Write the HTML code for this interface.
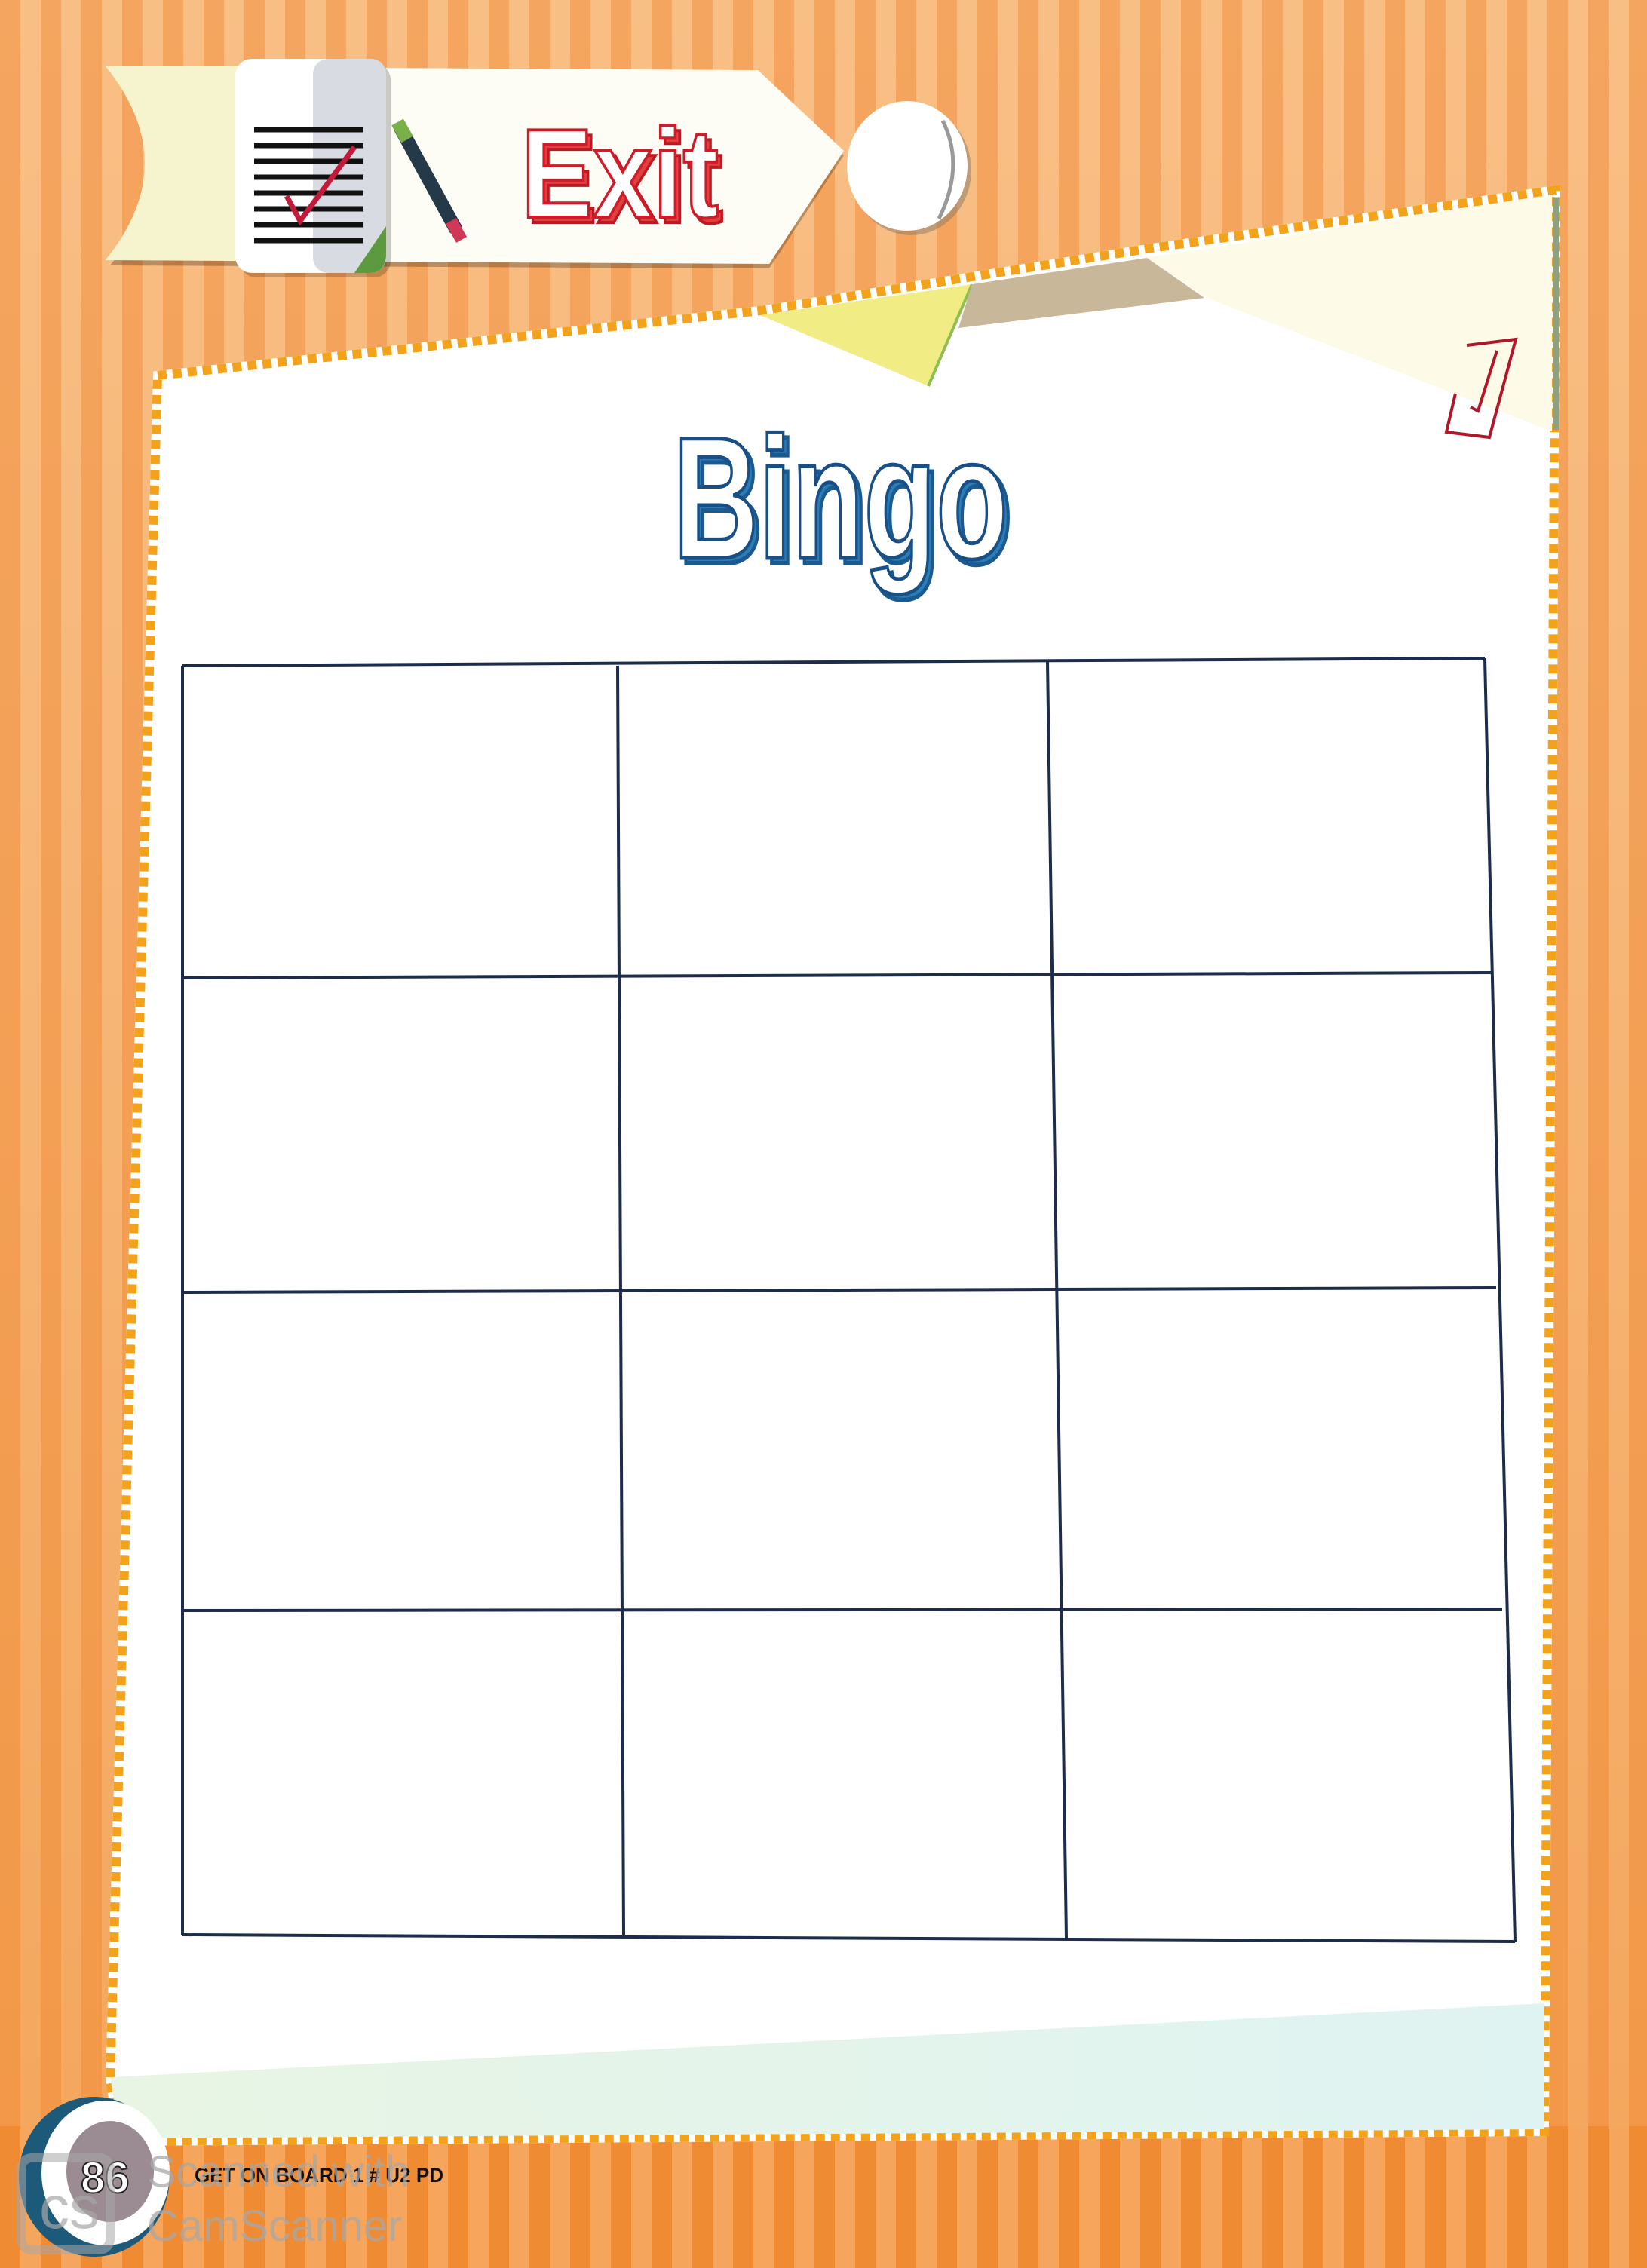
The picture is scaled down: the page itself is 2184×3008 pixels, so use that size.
<!DOCTYPE html>
<html><head><meta charset="utf-8"><style>
html,body{margin:0;padding:0;width:2184px;height:3008px;overflow:hidden;background:#f5ad68;}
svg{display:block}
</style></head><body>
<svg width="2184" height="3008" viewBox="0 0 2184 3008" xmlns="http://www.w3.org/2000/svg">
<defs>
<pattern id="st" width="54" height="3008" patternUnits="userSpaceOnUse">
<rect width="54" height="3008" fill="#f4a55f"/>
<rect x="27" width="27" height="3008" fill="#f8bf85"/>
</pattern>
<pattern id="st2" width="54" height="3008" patternUnits="userSpaceOnUse">
<rect width="54" height="3008" fill="#ef8b33"/>
<rect x="27" width="27" height="3008" fill="#f5a55c"/>
</pattern>
<linearGradient id="fade" x1="0" y1="0" x2="0" y2="1">
<stop offset="0" stop-color="#ee8628" stop-opacity="0"/>
<stop offset="0.4" stop-color="#ee8628" stop-opacity="0.15"/>
<stop offset="1" stop-color="#ee8628" stop-opacity="0.45"/>
</linearGradient>
<linearGradient id="band" x1="0" y1="0" x2="1" y2="0">
<stop offset="0" stop-color="#e8f5e4"/><stop offset="1" stop-color="#dff3f2"/>
</linearGradient>
</defs>
<rect width="2184" height="3008" fill="url(#st)"/>
<rect width="2184" height="3008" fill="url(#fade)"/>
<rect y="2820" width="2184" height="188" fill="url(#st2)"/>

<!-- paper -->
<polygon points="209,498 1008,412 1521,330 2063,252 2048,2827 160,2840 146,2760" fill="#fff" stroke="#fff" stroke-width="12"/>
<polygon points="209,498 1008,412 1521,330 2063,252 2048,2827 160,2840 146,2760" fill="none" stroke="#f3a21c" stroke-width="12" stroke-dasharray="12 8"/>
<polygon points="146,2755 2048,2657 2048,2824 160,2836" fill="url(#band)"/>
<!-- bunting -->
<polygon points="1008,418 1289,377 1231,512" fill="#f1ec84"/>
<line x1="1289" y1="377" x2="1231" y2="512" stroke="#8fbf50" stroke-width="4"/>
<polygon points="1289,377 1521,342 1597,395 1271,435" fill="#c9b79a"/>
<polygon points="1521,342 2058,258 2058,572 1600,395" fill="#fdfbe7"/>
<line x1="2063" y1="262" x2="2063" y2="570" stroke="#8fa080" stroke-width="8"/>
<path d="M1945,458 L2010,450 L1975,580 L1918,573 L1930,522 M1950,540 L1960,545 L1985,465" fill="none" stroke="#b0182a" stroke-width="4"/>

<!-- grid -->
<g stroke="#1d2c4a" stroke-width="4" fill="none">
<line x1="242" y1="883" x2="1969" y2="873"/>
<line x1="242" y1="1297" x2="1977" y2="1290"/>
<line x1="242" y1="1714" x2="1984" y2="1708"/>
<line x1="242" y1="2136" x2="1992" y2="2134"/>
<line x1="242" y1="2566" x2="2009" y2="2575"/>
<line x1="242" y1="883" x2="242" y2="2566"/>
<line x1="819" y1="883" x2="827" y2="2566"/>
<line x1="1389" y1="877" x2="1414" y2="2570"/>
<line x1="1969" y1="873" x2="2009" y2="2575"/>
</g>

<!-- Bingo title -->
<g font-family="Liberation Sans, sans-serif" font-weight="bold">
<text x="899" y="747" font-size="230" textLength="444" lengthAdjust="spacingAndGlyphs" fill="#2a7db5" stroke="#1a5a90" stroke-width="6">Bingo</text>
<text x="893" y="740" font-size="230" textLength="444" lengthAdjust="spacingAndGlyphs" fill="#fff" stroke="#174f86" stroke-width="5">Bingo</text>
</g>

<!-- exit banner -->
<path d="M146,96 L1005,99 L1119,206 L1020,356 L146,352 Q250,224 146,96 Z" fill="#000" opacity="0.25"/>
<path d="M140,88 L1005,93 L1119,200 L1020,350 L140,345 Q244,216 140,88 Z" fill="#fdfdf6"/>
<path d="M140,88 L320,88 L320,345 L140,345 Q244,216 140,88 Z" fill="#f6f3cf"/>
<ellipse cx="1208" cy="226" rx="80" ry="86" fill="#8a7a6a" opacity="0.5"/>
<ellipse cx="1203" cy="220" rx="80" ry="86" fill="#fff"/>
<path d="M1250,160 Q1280,220 1245,290" fill="none" stroke="#999" stroke-width="5"/>
<!-- document icon -->
<rect x="318" y="84" width="200" height="284" rx="22" fill="#000" opacity="0.2"/>
<rect x="312" y="78" width="200" height="284" rx="22" fill="#fff"/>
<rect x="415" y="78" width="97" height="284" rx="20" fill="#d8dbe2"/>
<path d="M470,362 L512,300 L512,340 Q510,362 490,362 Z" fill="#5c9a40"/>
<g stroke="#111" stroke-width="7">
<line x1="337" y1="172" x2="482" y2="172"/><line x1="337" y1="193" x2="482" y2="193"/>
<line x1="337" y1="214" x2="482" y2="214"/><line x1="337" y1="235" x2="482" y2="235"/>
<line x1="337" y1="256" x2="482" y2="256"/><line x1="337" y1="277" x2="482" y2="277"/>
<line x1="337" y1="298" x2="482" y2="298"/><line x1="337" y1="319" x2="482" y2="319"/>
</g>
<path d="M380,260 L398,293 L470,195" fill="none" stroke="#c21a3a" stroke-width="7"/>
<!-- pencil -->
<line x1="530" y1="168" x2="605" y2="305" stroke="#253a48" stroke-width="18"/>
<line x1="527" y1="162" x2="540" y2="185" stroke="#7ab04a" stroke-width="18"/>
<line x1="598" y1="293" x2="612" y2="318" stroke="#d03858" stroke-width="16"/>
<!-- Exit text -->
<g font-family="Liberation Sans, sans-serif" font-weight="bold">
<text x="697" y="295" font-size="168" textLength="262" lengthAdjust="spacingAndGlyphs" fill="#e04040" stroke="#c01820" stroke-width="4">Exit</text>
<text x="691" y="288" font-size="168" textLength="262" lengthAdjust="spacingAndGlyphs" fill="#fff" stroke="#d01c28" stroke-width="4">Exit</text>
</g>

<!-- page number -->
<ellipse cx="125" cy="2887" rx="100" ry="106" fill="#1d5a7a"/>
<ellipse cx="140" cy="2882" rx="85" ry="96" fill="#fff"/>
<ellipse cx="146" cy="2880" rx="58" ry="67" fill="#9a8c92"/>
<text x="107" y="2908" font-family="Liberation Sans, sans-serif" font-weight="bold" font-size="58" fill="#fff" stroke="#222" stroke-width="2">86</text>
<text x="258" y="2894" font-family="Liberation Sans, sans-serif" font-weight="bold" font-size="27" fill="#111" textLength="330" lengthAdjust="spacingAndGlyphs">GET ON BOARD 1 # U2 PD</text>
<!-- watermark -->
<g opacity="0.55" fill="none" stroke="#a8a8a8" stroke-width="12">
<rect x="28" y="2862" width="118" height="122" rx="14"/>
</g>
<text x="52" y="2955" font-family="Liberation Sans, sans-serif" font-size="80" fill="#a8a8a8" opacity="0.7">cs</text>
<text x="195" y="2900" font-family="Liberation Sans, sans-serif" font-size="58" fill="#a8a8a8" opacity="0.75">Scanned with</text>
<text x="195" y="2972" font-family="Liberation Sans, sans-serif" font-size="58" fill="#a8a8a8" opacity="0.75">CamScanner</text>
</svg>
</body></html>
